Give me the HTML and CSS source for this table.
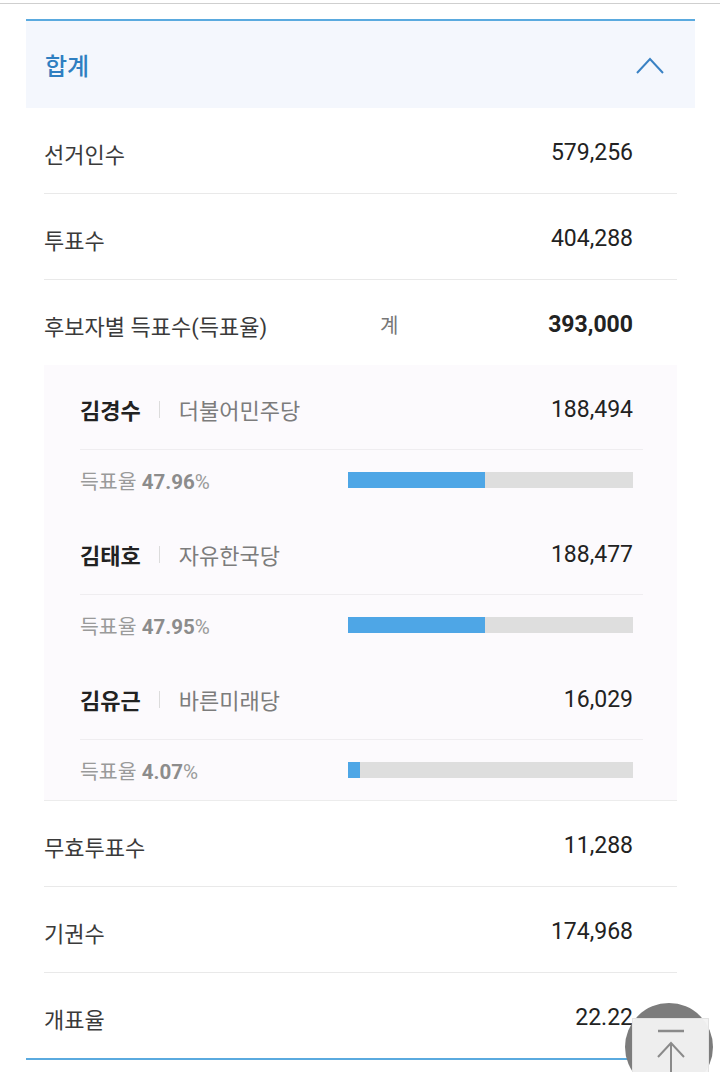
FILE: index.html
```html
<!DOCTYPE html>
<html lang="ko">
<head>
<meta charset="utf-8">
<link rel="stylesheet" href="styles.css">
</head>
<body>
<div class="topbar"></div>
<section class="panel">
  <div class="panel-head">
    <h2 class="panel-title">합계</h2>
    <svg class="chev" width="30" height="18" viewBox="0 0 30 18"><polyline points="2,16 15,2 28,16" fill="none" stroke="#3a82c4" stroke-width="2"/></svg>
  </div>
  <div class="panel-body">
    <div class="row"><span class="label">선거인수</span><span class="value">579,256</span></div>
    <div class="row"><span class="label">투표수</span><span class="value">404,288</span></div>
    <div class="row row-total"><span class="label">후보자별 득표수(득표율)</span><span class="sum-label">계</span><span class="value strong">393,000</span></div>
    <div class="cands">
      <div class="cand-name">
        <span class="name">김경수</span><span class="sep"></span><span class="party">더불어민주당</span>
        <span class="value">188,494</span>
      </div>
      <div class="cand-rate">
        <span class="rate">득표율 <b>47.96</b>%</span>
        <div class="bar"><div class="fill" style="width:47.96%"></div></div>
      </div>
      <div class="cand-name">
        <span class="name">김태호</span><span class="sep"></span><span class="party">자유한국당</span>
        <span class="value">188,477</span>
      </div>
      <div class="cand-rate">
        <span class="rate">득표율 <b>47.95</b>%</span>
        <div class="bar"><div class="fill" style="width:47.95%"></div></div>
      </div>
      <div class="cand-name">
        <span class="name">김유근</span><span class="sep"></span><span class="party">바른미래당</span>
        <span class="value">16,029</span>
      </div>
      <div class="cand-rate">
        <span class="rate">득표율 <b>4.07</b>%</span>
        <div class="bar"><div class="fill" style="width:4.07%"></div></div>
      </div>
    </div>
    <div class="row"><span class="label">무효투표수</span><span class="value">11,288</span></div>
    <div class="row"><span class="label">기권수</span><span class="value">174,968</span></div>
    <div class="row row-last"><span class="label">개표율</span><span class="value">22.22</span></div>
  </div>
</section>
<div class="totop">
  <div class="totop-circle"></div>
  <div class="totop-box">
    <svg width="32" height="44" viewBox="0 0 32 44"><line x1="3" y1="2" x2="29" y2="2" stroke="#8a8a8a" stroke-width="2.5"/><line x1="16" y1="14" x2="16" y2="44" stroke="#8a8a8a" stroke-width="2"/><polyline points="3,28 16,14 29,28" fill="none" stroke="#8a8a8a" stroke-width="2"/></svg>
  </div>
</div>
</body>
</html>
```

FILE: styles.css
```css
* { box-sizing: border-box; }
html, body { margin: 0; padding: 0; background: #fff; }
body {
  font-family: Roboto, "Noto Sans CJK KR", "Noto Sans", sans-serif;
  color: #333;
  width: 720px;
  height: 1072px;
  overflow: hidden;
  position: relative;
}
.topbar {
  height: 4px;
  border-bottom: 1px solid #cfcfcf;
}
.panel {
  margin: 15px 25px 0 26px;
  border-top: 2px solid #5aaadf;
  border-bottom: 2px solid #5aaadf;
}
.panel-head {
  height: 87px;
  background: #f4f7fd;
  display: flex;
  align-items: center;
  justify-content: space-between;
  padding: 0 30px 0 19px;
}
.panel-title {
  margin: 0;
  font-size: 24px;
  font-weight: 500;
  color: #2f7fc1;
}
.chev { margin-top: 2px; }
.panel-body { padding: 0 18px; }
.row {
  height: 86px;
  display: flex;
  align-items: center;
  border-bottom: 1px solid #e9e9e9;
  padding: 4px 44px 0 0;
  font-size: 22px;
}
.row .label { color: #3a3a3a; flex: 1; }
.value { color: #222; font-size: 23px; }
.value.strong { font-weight: 700; }
.row-total { border-bottom: none; height: 85px; }
.row-total .label { flex: none; width: 336px; }
.sum-label { color: #777; flex: 1; font-size: 20px; }
.row-last { border-bottom: none; height: 85px; }
.cands {
  background: #fcfafd;
  padding: 0 34px 0 36px;
  border-bottom: 1px solid #ececec;
}
.cand-name {
  height: 85px;
  display: flex;
  align-items: center;
  border-bottom: 1px solid #efedf0;
  padding: 4px 10px 0 0;
  font-size: 22px;
}
.cand-name .name { font-weight: 700; color: #222; }
.sep {
  width: 1px;
  height: 17px;
  background: #dcdcdc;
  margin: 0 19px 0 18px;
}
.party { color: #7c7c7c; flex: 1; }
.cand-rate {
  height: 60px;
  display: flex;
  align-items: center;
  padding: 0 10px 0 0;
}
.rate {
  width: 268px;
  font-size: 20.5px;
  color: #9a9a9a;
}
.rate b { font-weight: 700; color: #8c8c8c; }
.bar {
  flex: 1;
  height: 16px;
  background: #dedede;
}
.fill { height: 100%; background: #4ea6e6; }
.totop {
  position: absolute;
  left: 624px;
  top: 1003px;
  width: 96px;
  height: 69px;
}
.totop-circle {
  position: absolute;
  left: 1px;
  top: 0;
  width: 88px;
  height: 88px;
  border-radius: 50%;
  background: #7c7c7c;
}
.totop-box {
  position: absolute;
  left: 8px;
  top: 15px;
  width: 77px;
  height: 60px;
  background: rgba(242, 242, 242, 0.96);
  border: 1px solid #e2e2e2;
  display: flex;
  justify-content: center;
  padding-top: 10px;
}
```
